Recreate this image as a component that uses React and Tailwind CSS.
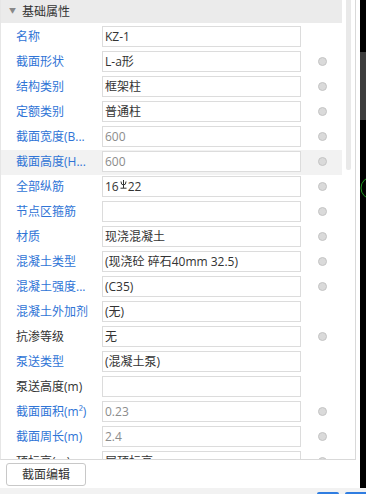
import React from 'react';

const rows = [
  { label: '名称', value: 'KZ-1', dot: false },
  { label: '截面形状', value: 'L-a形', dot: true },
  { label: '结构类别', value: '框架柱', dot: true },
  { label: '定额类别', value: '普通柱', dot: true },
  { label: '截面宽度(B...', value: '600', dot: true, muted: true },
  { label: '截面高度(H...', value: '600', dot: true, muted: true, active: true },
  { label: '全部纵筋', value: 'rebar', dot: true },
  { label: '节点区箍筋', value: '', dot: true },
  { label: '材质', value: '现浇混凝土', dot: true },
  { label: '混凝土类型', value: '(现浇砼 碎石40mm 32.5)', dot: true },
  { label: '混凝土强度...', value: '(C35)', dot: true },
  { label: '混凝土外加剂', value: '(无)', dot: false },
  { label: '抗渗等级', value: '无', dot: true, plain: true },
  { label: '泵送类型', value: '(混凝土泵)', dot: false },
  { label: '泵送高度(m)', value: '', dot: false, plain: true },
  { label: '截面面积(m²)', value: '0.23', dot: true, muted: true },
  { label: '截面周长(m)', value: '2.4', dot: true, muted: true },
  { label: '顶标高(m)', value: '层顶标高', dot: true, plain: true },
];

function RebarSymbol() {
  return (
    <svg width="7" height="9" viewBox="0 0 7 9" className="inline-block mx-[1px] -translate-y-[3px]">
      <path d="M1 1.5 Q1 5 3.5 5 Q6 5 6 1.5 M3.5 0 V8 M0.5 8.2 H6.5" fill="none" stroke="#333" strokeWidth="1" />
    </svg>
  );
}

function Row({ row }) {
  return (
    <div className={`shrink-0 flex items-start h-[25px] pt-[1px] ${row.active ? 'bg-[#f2f2f2]' : ''}`}>
      <div
        className={`w-[86px] ml-[15px] h-[21px] flex items-center whitespace-nowrap overflow-hidden ${
          row.plain ? 'text-[#333]' : 'text-[#2f74d6]'
        }`}
      >
        {row.label}
      </div>
      <div
        className={`w-[199px] h-[21px] border border-[#dcdcdc] bg-white flex items-center pl-[2px] whitespace-nowrap overflow-hidden ${
          row.muted ? 'text-[#8c8c8c]' : 'text-[#333]'
        }`}
      >
        {row.value === 'rebar' ? (
          <span>
            16<RebarSymbol />22
          </span>
        ) : (
          row.value
        )}
      </div>
      <div className="flex-1 flex justify-center pt-[6px] pl-[1px]">
        {row.dot && (
          <span className="w-[9px] h-[9px] rounded-full bg-[#dadada] border border-[#c4c4c4]" />
        )}
      </div>
    </div>
  );
}

export default function App() {
  return (
    <div
      className="w-[366px] h-[494px] flex flex-col bg-white overflow-hidden text-[12px]"
      style={{ fontFamily: '"Open Sans", "Noto Sans CJK SC", sans-serif' }}
    >
      <div className="flex h-[488px] shrink-0">
        <div className="w-[360px] flex flex-col">
          <div className="w-[356px] h-[460px] shrink-0 flex border-l border-r border-b border-l-[#e6e6e6] border-r-[#d9d9d9] border-b-[#d9d9d9]">
            <div className="w-[341px] flex flex-col overflow-hidden">
              <div className="h-[23px] shrink-0 bg-[#ebebeb] flex items-center text-[#333] mb-[2px]">
                <span className="text-[7px] text-[#888] ml-[8px] w-[13px]">▼</span>
                <span>基础属性</span>
              </div>
              {rows.map((row) => (
                <Row key={row.label} row={row} />
              ))}
            </div>
            <div className="w-[5px] ml-[4px] h-[170px] bg-[#e9e9e9] rounded-b-[2px]" />
          </div>
          <div className="flex-1 flex items-start pt-[3px] pl-[6px]">
            <button className="w-[80px] h-[23px] border border-[#c8c8c8] rounded-[3px] bg-white text-[#333] text-[12px]">
              截面编辑
            </button>
          </div>
        </div>
        <div className="flex-1 bg-black relative overflow-hidden">
          <div className="absolute left-0 top-[52px] w-[6px] h-[68px] bg-[#3d3d3d]" />
          <svg className="absolute left-0 top-[176px]" width="6" height="24" viewBox="0 0 6 24">
            <circle cx="12" cy="12" r="11" fill="none" stroke="#1f9a1f" strokeWidth="1" />
          </svg>
        </div>
      </div>
      <div className="flex-1 bg-[#f2f2f2] flex items-end">
        <div className="ml-[317px] w-[22px] h-[2px] bg-[#2f7de1] rounded-t-[2px]" />
        <div className="ml-[6px] flex-1 h-[2px] bg-[#2f7de1] rounded-tl-[2px]" />
      </div>
    </div>
  );
}
